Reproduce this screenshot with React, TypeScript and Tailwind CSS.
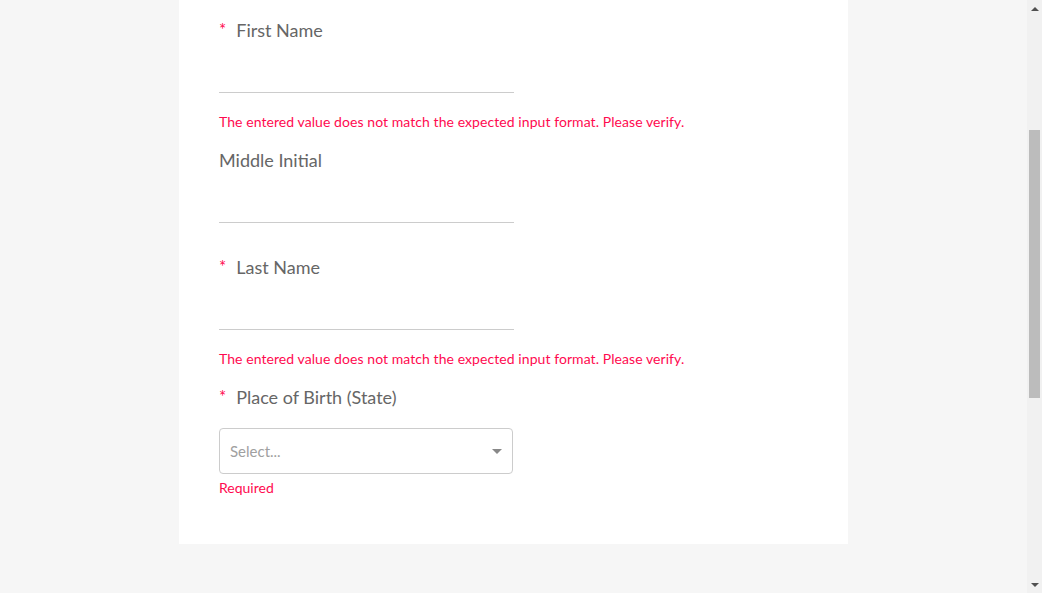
type Field = {
  label: string;
  required?: boolean;
  error?: string;
};

const fields: Field[] = [
  { label: "First Name", required: true, error: "The entered value does not match the expected input format. Please verify." },
  { label: "Middle Initial" },
  { label: "Last Name", required: true, error: "The entered value does not match the expected input format. Please verify." },
];

function Label({ label, required }: { label: string; required?: boolean }) {
  return (
    <div className="flex items-center h-[24px] text-[18px] text-[#666666] leading-[24px]">
      {required && <span className="text-[#ff0a50] mr-[10px] text-[17px]">*</span>}
      <span>{label}</span>
    </div>
  );
}

function TextField({ field }: { field: Field }) {
  return (
    <div className={field.error ? "mb-[16px]" : "mb-[32px]"}>
      <Label label={field.label} required={field.required} />
      <input
        type="text"
        className="block w-[295px] h-[51px] border-b border-[#cccccc] bg-transparent outline-none text-[16px] text-[#333]"
      />
      {field.error && (
        <div className="mt-[19px] h-[20px] leading-[20px] text-[14px] tracking-[0.07px] text-[#ff0a50]">{field.error}</div>
      )}
    </div>
  );
}

function Scrollbar() {
  return (
    <div className="w-[15px] bg-[#f1f1f1] flex flex-col items-center">
      <div className="h-[17px] flex items-center justify-center">
        <div className="w-0 h-0 border-l-[4px] border-r-[4px] border-b-[4px] border-l-transparent border-r-transparent border-b-[#505050]" />
      </div>
      <div className="h-[113px]" />
      <div className="w-[11px] h-[268px] bg-[#bcbcbc]" />
      <div className="flex-1" />
      <div className="h-[17px] flex items-center justify-center">
        <div className="w-0 h-0 border-l-[4px] border-r-[4px] border-t-[4px] border-l-transparent border-r-transparent border-t-[#505050]" />
      </div>
    </div>
  );
}

export default function App() {
  return (
    <div className="flex h-[593px] w-full bg-[#f6f6f6] font-['Lato','Open_Sans',sans-serif] overflow-hidden">
      <div className="flex-1 flex flex-col">
        <div className="ml-[179px] w-[669px] bg-white pl-[40px] pt-[18px] pb-[46px]">
          {fields.map((f) => (
            <TextField key={f.label} field={f} />
          ))}

          <div>
            <Label label="Place of Birth (State)" required />
            <div className="mt-[19px] w-[294px] h-[46px] border border-[#cccccc] rounded-[4px] flex items-center justify-between pl-[10px] pr-[10px]">
              <span className="text-[15px] text-[#a0a0a0]">Select...</span>
              <div className="w-0 h-0 border-l-[5px] border-r-[5px] border-t-[5px] border-l-transparent border-r-transparent border-t-[#888888]" />
            </div>
            <div className="mt-[4px] h-[20px] leading-[20px] text-[14px] text-[#ff0a50]">Required</div>
          </div>
        </div>
      </div>
      <Scrollbar />
    </div>
  );
}
